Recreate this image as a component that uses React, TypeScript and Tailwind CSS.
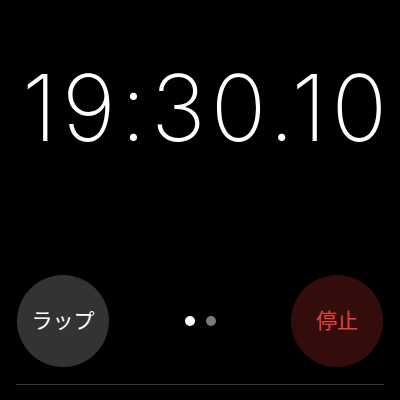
export default function App() {
  return (
    <div className="w-[400px] h-[400px] bg-black flex flex-col overflow-hidden" style={{ fontFamily: 'Inter, "Noto Sans CJK JP", sans-serif' }}>
      {/* Time */}
      <div className="pt-[62px] h-[260px]">
        <div className="text-white text-[92px] leading-none font-extralight text-center tracking-[5px] pl-[14px]">
          19:30.10
        </div>
      </div>

      {/* Controls */}
      <div className="flex items-center justify-between px-[17px] mt-[15px]">
        <button className="w-[92px] h-[92px] rounded-full bg-[#333333] text-white text-[21px] flex items-center justify-center">
          ラップ
        </button>
        <div className="flex items-center gap-[11px]">
          <span className="w-[10px] h-[10px] rounded-full bg-white" />
          <span className="w-[10px] h-[10px] rounded-full bg-[#7a7a7a]" />
        </div>
        <button className="w-[92px] h-[92px] rounded-full bg-[#330d0b] text-[#e5433a] text-[21px] flex items-center justify-center">
          停止
        </button>
      </div>

      <div className="mx-[16px] mt-[17px] h-px bg-[#3a3a3a]" />
    </div>
  )
}
